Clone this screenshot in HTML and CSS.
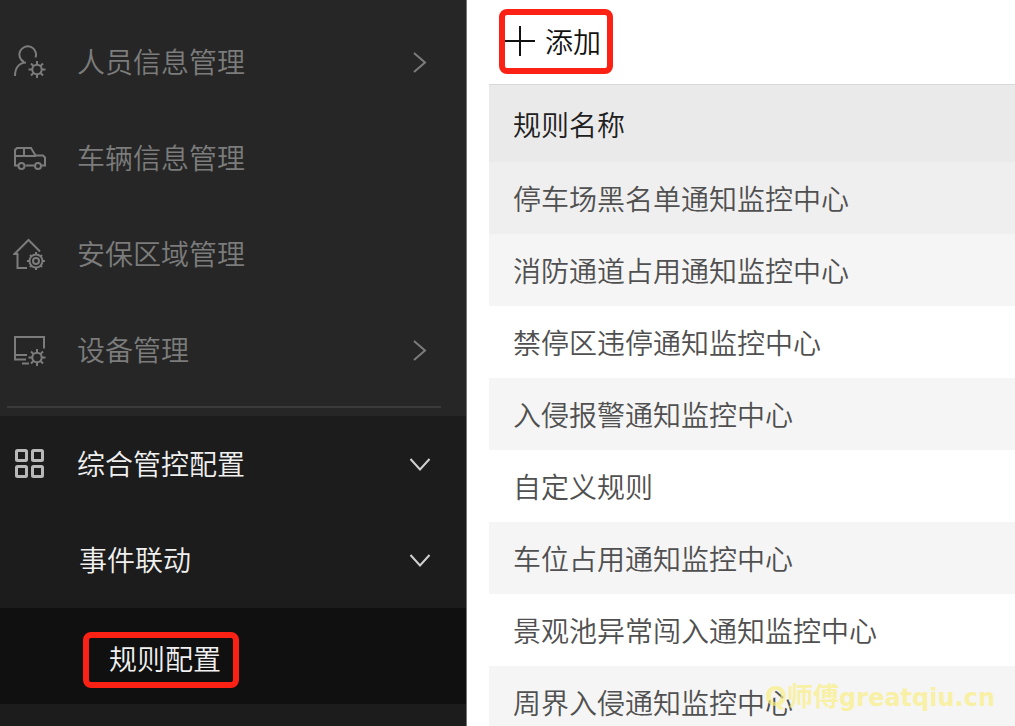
FILE: index.html
```html
<!DOCTYPE html>
<html lang="zh-CN">
<head>
<meta charset="utf-8">
<meta name="viewport" content="width=device-width, initial-scale=1">
<title>规则配置</title>
<link rel="stylesheet" href="styles.css">
</head>
<body>
<div class="app">
  <nav class="sidebar">
    <ul class="menu">
      <li><a class="item" href="#people">
        <svg class="icon" viewBox="0 0 34 34"><path d="M11 17A8.300 8.300 0 1 1 22.500 12.500M2 31C2 23 6 18 13 17.500"/><circle cx="24" cy="24.500" r="4.700"/><path d="M24 16v4M24 29v4M15.500 24.500h4M28.500 24.500h4M18 18.500l2.700 2.700M27.300 27.800l2.700 2.700M18 30.500l2.700-2.700M27.300 21.200l2.700-2.700"/></svg>
        <span class="label">人员信息管理</span>
        <svg class="arrow" viewBox="0 0 22 22"><path d="M5 2l11 9.500L5 21"/></svg></a></li>
      <li><a class="item" href="#cars">
        <svg class="icon" viewBox="0 0 34 34"><path d="M5 24.500H2V9L4 7H18L22.500 14.500H30L32 16.500V24.500H29M12.500 24.500H21M2 15H23M11 7v8"/><circle cx="8.500" cy="25" r="3"/><circle cx="25" cy="25" r="3"/></svg>
        <span class="label">车辆信息管理</span></a></li>
      <li><a class="item" href="#areas">
        <svg class="icon" viewBox="0 0 34 34"><path d="M14 31H4.500V17H1.500L15.500 3L27 14.500"/><circle cx="23" cy="24" r="6.500"/><circle cx="23" cy="24" r="3"/><path d="M23 15v2.500M23 30.500v2.500M14 24h2.500M29.500 24h2.500M17 18l1.500 1.500M27.500 28.500l1.500 1.500M17 30l1.500-1.500M27.500 19.500l1.500-1.500"/></svg>
        <span class="label">安保区域管理</span></a></li>
      <li><a class="item" href="#devices">
        <svg class="icon" viewBox="0 0 34 34"><path d="M13 26.500H2V4H31V15.500M3 22H14M9 30.500H16"/><circle cx="24" cy="24.500" r="4.700"/><path d="M24 16v4M24 29v4M15.500 24.500h4M28.500 24.500h4M18 18.500l2.700 2.700M27.300 27.800l2.700 2.700M18 30.500l2.700-2.700M27.300 21.200l2.700-2.700"/></svg>
        <span class="label">设备管理</span>
        <svg class="arrow" viewBox="0 0 22 22"><path d="M5 2l11 9.500L5 21"/></svg></a></li>
    </ul>
    <ul class="submenu">
      <li><a class="item" href="#control">
        <svg class="icon" viewBox="0 0 34 34"><rect x="3.500" y="3.500" width="10" height="10" rx="1"/><rect x="19.500" y="3.500" width="10" height="10" rx="1"/><rect x="3.500" y="19.500" width="10" height="10" rx="1"/><rect x="19.500" y="19.500" width="10" height="10" rx="1"/></svg>
        <span class="label">综合管控配置</span>
        <svg class="arrow" viewBox="0 0 22 22"><path d="M1.500 6l9.500 10.500L20.500 6"/></svg></a></li>
      <li><a class="item second" href="#events">
        <span class="label">事件联动</span>
        <svg class="arrow" viewBox="0 0 22 22"><path d="M1.500 6l9.500 10.500L20.500 6"/></svg></a></li>
      <li><a class="item third" href="#rules" aria-current="page"><span class="mark current">规则配置</span></a></li>
    </ul>
  </nav>
  <main class="content">
    <div class="toolbar">
      <button class="mark add" type="button"><svg class="plus" viewBox="0 0 30 30"><path d="M0 15h30M15 0v30"/></svg>添加</button>
    </div>
    <table class="rules">
      <thead><tr><th scope="col">规则名称</th></tr></thead>
      <tbody>
        <tr class="hovered"><td>停车场黑名单通知监控中心</td></tr>
        <tr class="shaded"><td>消防通道占用通知监控中心</td></tr>
        <tr><td>禁停区违停通知监控中心</td></tr>
        <tr class="shaded"><td>入侵报警通知监控中心</td></tr>
        <tr><td>自定义规则</td></tr>
        <tr class="shaded"><td>车位占用通知监控中心</td></tr>
        <tr><td>景观池异常闯入通知监控中心</td></tr>
        <tr class="shaded"><td>周界入侵通知监控中心</td></tr>
      </tbody>
    </table>
  </main>
  <div class="watermark"><span class="author">Q师傅</span>greatqiu.cn</div>
</div>
</body>
</html>
```

FILE: styles.css
```css
* {
  box-sizing: border-box;
}

body {
  margin: 0;
  font: 350 28px/40px "Noto Sans CJK SC", sans-serif;
  color: #505050;
  background: #fff;
}

.app {
  position: relative;
  display: flex;
  height: 100vh;
  overflow: hidden;
}

.sidebar {
  flex: 0 0 46%;
  background: #1c1c1c;
  border-right: 1px solid #777;
}

.menu,
.submenu {
  margin: 0;
  padding: 0;
  list-style: none;
}

.menu {
  padding: 14px 0 18px;
  color: #7c7c7c;
  background: linear-gradient(#3a3a3a, #3a3a3a) 7px calc(100% - 8px) / calc(100% - 32px) 2px no-repeat #262626;
}

.submenu {
  color: #f0f0f0;
}

.item {
  display: flex;
  align-items: center;
  height: 96px;
  padding: 0 35px 0 13px;
  color: inherit;
  text-decoration: none;
}

.label {
  padding-bottom: 2px;
}

.icon {
  width: 34px;
  height: 34px;
  margin-right: 30px;
}

.icon,
.arrow,
.plus {
  flex: none;
  fill: none;
  stroke: currentColor;
  stroke-width: 2;
}

.submenu .icon {
  color: #b8b8b8;
  stroke-width: 3;
}

.arrow {
  width: 22px;
  height: 22px;
  margin-left: auto;
}

.submenu .arrow {
  color: #d0d0d0;
}

.second {
  padding-left: 79px;
}

.third {
  padding-top: 8px;
  padding-left: 83px;
  background: #101010;
}

.mark {
  border: 6px solid #fb2114;
  border-radius: 8px;
}

.current {
  padding: 0 12px 4px 20px;
}

.content {
  flex: 1;
  min-width: 0;
  padding-left: 22px;
}

.toolbar {
  height: 84px;
  padding: 9px 10px;
}

.add {
  display: flex;
  align-items: center;
  height: 65px;
  padding: 0 6px 2px 0;
  font: inherit;
  color: #111;
  background: #fff;
}

.plus {
  width: 30px;
  height: 30px;
  margin-right: 10px;
}

.rules {
  width: 100%;
  border-spacing: 0;
  border-top: 1px solid #d8d8d8;
}

.rules th,
.rules td {
  height: 72px;
  padding: 0 24px;
  text-align: left;
}

.rules th {
  height: 77px;
  font-weight: 350;
  color: #202020;
  background: #eaeaea;
}

.hovered {
  background: #efefef;
}

.shaded {
  background: #f5f5f5;
}

.watermark {
  position: absolute;
  right: 20px;
  bottom: 10px;
  font: bold 24px/36px "DejaVu Sans", "Noto Sans CJK SC", sans-serif;
  color: rgba(250, 238, 130, 0.7);
}

.author {
  font-size: 26px;
}
```
